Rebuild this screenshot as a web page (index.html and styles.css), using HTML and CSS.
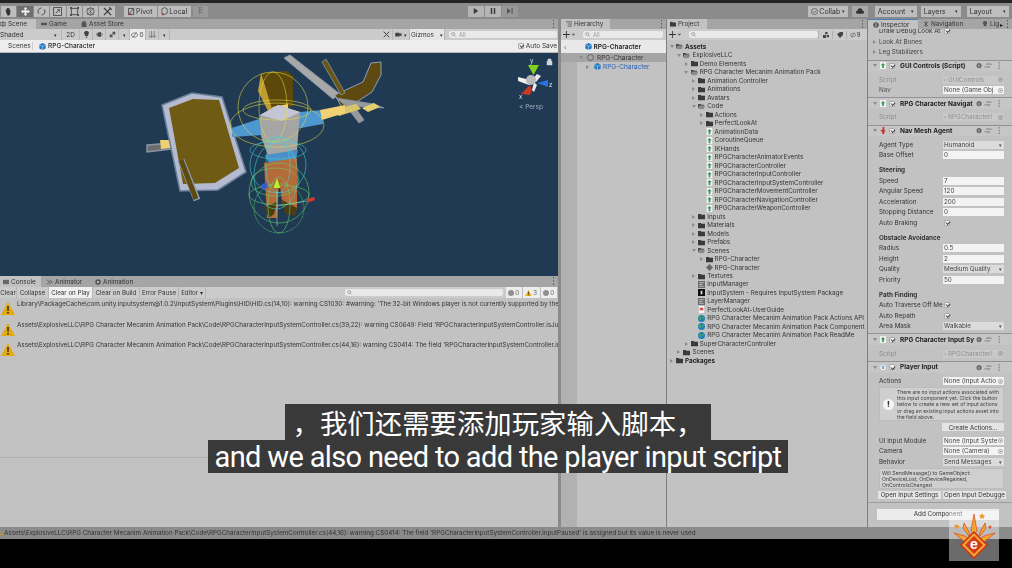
FILE: index.html
```html
<!DOCTYPE html>
<html lang="en">
<head>
<meta charset="utf-8">
<title>Unity Editor</title>
<link rel="stylesheet" href="styles.css">
</head>
<body>
<svg class="defs" width="0" height="0">
  <symbol id="folder" viewBox="0 0 8 7"><path d="M0 .5h3l1 1h4v5.500H0z" fill="#3a3a3a"/></symbol>
  <symbol id="folderopen" viewBox="0 0 8 7"><path d="M0 .5h3l1 1h3v1H2L0 6z" fill="#4a4a4a"/><path d="M2 3h6L6.500 6.500H.5z" fill="#8a8a8a"/></symbol>
  <symbol id="script" viewBox="0 0 7 8"><path d="M0 0h7v8H0z" fill="#f1f1f1"/><path d="M3.500 1 6 3.800H4.500V7h-2V3.800H1z" fill="#2f9a55"/></symbol>
  <symbol id="cube" viewBox="0 0 10 10"><path d="M5 0 9.500 2.300v5.400L5 10 .5 7.700V2.300z" fill="#2377c8"/><path d="M5 4.800 9.500 2.300M5 4.800.5 2.300M5 4.800V10" stroke="#dff" stroke-width=".7" fill="none"/></symbol>
  <symbol id="globe" viewBox="0 0 8 8"><circle cx="4" cy="4" r="4" fill="#1f7fb8"/><path d="M1 2c2-1 3 0 3 2S2 6 1 5zM5 1c2 0 2 2 2 3s-2 0-2-1z" fill="#45a35a"/></symbol>
  <symbol id="asset" viewBox="0 0 8 8"><path d="M0 0h8v8H0z" fill="#6c6c6c"/><path d="M1.500 2h5M1.500 4h3M1.500 6h5" stroke="#ddd" stroke-width=".8"/></symbol>
  <symbol id="warn" viewBox="0 0 14 13"><path d="M7 0 14 13H0z" fill="#e6a80f"/><path d="M6.200 4h1.600l-.2 5H6.400zM6.200 10h1.600v1.600H6.200z" fill="#2a2a2a"/></symbol>
  <symbol id="dots" viewBox="0 0 3 9"><path d="M1 0h1v1.500H1zM1 3.700h1v1.500H1zM1 7.400h1v1.500H1z" fill="#444"/></symbol>
  <symbol id="plus" viewBox="0 0 14 8"><path d="M3.500 0h1v3.500H8v1H4.500V8h-1V4.500H0v-1h3.500z" fill="#333"/><path d="M10 3h4l-2 2.500z" fill="#555"/></symbol>
  <symbol id="ctrls" viewBox="0 0 30 8"><circle cx="3" cy="4" r="3" fill="#666"/><path d="M2.600 2h.8v.8h-.8zM2.600 3.400h.8V6h-.8z" fill="#ddd"/><path d="M11 2.500h7M13 2.500l1-1.500M16 5.500H9M14 5.500l-1 1.500" stroke="#777" stroke-width=".8" fill="none"/><path d="M25.500 0h1v1.600h-1zM25.500 3.200h1v1.600h-1zM25.500 6.400h1V8h-1z" fill="#666"/></symbol>
  <symbol id="target" viewBox="0 0 6 6"><circle cx="3" cy="3" r="2.500" stroke="#888" fill="none" stroke-width=".8"/><circle cx="3" cy="3" r="1" fill="#888"/></symbol>
</svg>
<div id="app">
  <div class="topline"></div>
  <header class="toolbar">
    <div class="btngroup tools">
      <span class="tool"><svg viewBox="0 0 10 10"><path d="M2 5V3h1V1.500h1V1h1v.5h1V3h1v4L6 9.500H4z" fill="#333"/></svg></span>
      <span class="tool on"><svg viewBox="0 0 10 10"><path d="M5 0 7 2H6v2h2V3l2 2-2 2V6H6v2h1L5 10 3 8h1V6H2v1L0 5l2-2v1h2V2H3z" fill="#eee"/></svg></span>
      <span class="tool"><svg viewBox="0 0 10 10"><path d="M2 7.500A4 4 0 0 1 5 1M8 2.500A4 4 0 0 1 5 9" stroke="#444" fill="none"/></svg></span>
      <span class="tool"><svg viewBox="0 0 10 10"><path d="M.5.500h9v9h-9zM3 7l4-4M5 3h2v2" stroke="#444" fill="none"/></svg></span>
      <span class="tool"><svg viewBox="0 0 10 10"><path d="M1.500 1.500h7v7h-7z" stroke="#444" fill="none"/><path d="M0 0h2v2H0zM8 0h2v2H8zM0 8h2v2H0zM8 8h2v2H8z" fill="#444"/></svg></span>
      <span class="tool"><svg viewBox="0 0 10 10"><circle cx="5" cy="5" r="4" stroke="#555" fill="none"/><path d="M1 9 9 1M1 1l8 8M5 0v10" stroke="#555" stroke-width=".6"/></svg></span>
      <span class="tool"><svg viewBox="0 0 10 10"><path d="M1 1l8 8M9 1 1 9M7 .5 9.500 3" stroke="#333" stroke-width="1.300" fill="none"/></svg></span>
    </div>
    <div class="btngroup pivot">
      <span class="pbtn"><svg viewBox="0 0 8 10"><path d="M.5 1.500h6v7h-6z" stroke="#444" fill="none"/><path d="M1 8l5-6" stroke="#444"/><circle cx="2" cy="8" r="1.300" fill="#b33"/></svg>Pivot</span>
      <span class="pbtn"><svg viewBox="0 0 8 10"><path d="M1 2l3-1.500L7 2v5L4 8.500 1 7z" stroke="#555" fill="none"/><circle cx="2" cy="8" r="1.300" fill="#b33"/></svg>Local</span>
    </div>
    <span class="snap"><svg viewBox="0 0 8 10"><path d="M1 1h6M1 4h6M1 7h6M3 0v9" stroke="#7e6d6d" fill="none"/></svg></span>
    <div class="btngroup play">
      <span class="pl"><svg viewBox="0 0 8 8"><path d="M1 0l6 4-6 4z" fill="#3c3c3c"/></svg></span>
      <span class="pl"><svg viewBox="0 0 8 8"><path d="M1 0h2v8H1zM5 0h2v8H5z" fill="#3c3c3c"/></svg></span>
      <span class="pl dim"><svg viewBox="0 0 8 8"><path d="M0 0l5 4-5 4zM6 0h1.500v8H6z" fill="#555"/></svg></span>
    </div>
    <span class="tbtn collab"><svg viewBox="0 0 8 8"><circle cx="4" cy="4" r="3.500" fill="none" stroke="#666"/><path d="M2 4l1.500 1.500L6 2.800" stroke="#666" fill="none"/></svg>Collab<i>▾</i></span>
    <span class="tbtn cloud"><svg viewBox="0 0 10 7"><path d="M2 7a2 2 0 0 1 0-4 3 3 0 0 1 6 0 2 2 0 0 1 0 4z" fill="#333"/></svg></span>
    <span class="tbtn account">Account<i>▾</i></span>
    <span class="tbtn layers">Layers<i>▾</i></span>
    <span class="tbtn layout">Layout<i>▾</i></span>
  </header>

  <main class="main">
    <section class="leftcol">
      <div class="tabs scenetabs">
        <span class="tab active t-scene"><svg class="ti" viewBox="0 0 7 7"><path d="M3.500 0v7M0 2h7v3H0z" stroke="#555" fill="none"/></svg>Scene</span>
        <span class="tab t-game"><svg class="ti" viewBox="0 0 7 7"><path d="M0 2h7v3H0z" fill="#555"/></svg>Game</span>
        <span class="tab t-store"><svg class="ti" viewBox="0 0 7 7"><path d="M1 2h5v5H1zM2 2V.5h3V2" fill="#555" stroke="#555" stroke-width=".5"/></svg>Asset Store</span>
        <svg class="tabdots" viewBox="0 0 3 9"><use href="#dots"/></svg>
      </div>
      <div class="scenebar">
        <span class="sb shaded">Shaded<i>▾</i></span>
        <span class="sb s2d">2D</span>
        <span class="sb sic"><svg viewBox="0 0 8 10"><path d="M4 0a3 3 0 0 1 2 5.500V7H2V5.500A3 3 0 0 1 4 0zM3 8h2v1.500H3z" fill="#444"/></svg></span>
        <span class="sb sic"><svg viewBox="0 0 10 8"><path d="M4 1 7 0v8L4 7H2V1zM0 3h1v2H0zM8 2h1v4H8z" fill="#444"/></svg></span>
        <span class="sb sic"><svg viewBox="0 0 10 8"><path d="M1 4h4v4H1zM5 0h4v4H5z" fill="#555"/></svg></span>
        <span class="sb sarrow">▾</span>
        <span class="sb svis"><svg viewBox="0 0 10 8"><path d="M0 4c3-4 7-4 10 0-3 4-7 4-10 0zM2 8l6-8" stroke="#555" fill="none"/></svg>0</span>
        <span class="sb sic"><svg viewBox="0 0 8 8"><path d="M0 0v8M3 0v8M6 0v8M0 6h8" stroke="#777"/></svg></span>
        <span class="sb sarrow">▾</span>
        <span class="spacer"></span>
        <span class="sb sic"><svg viewBox="0 0 10 10"><path d="M1 1l8 8M9 1 1 9" stroke="#444" stroke-width="1.400"/></svg></span>
        <span class="sb scam"><svg viewBox="0 0 12 8"><path d="M0 1h7v6H0zM7 3l3-2v6L7 5z" fill="#444"/></svg>▾</span>
        <span class="sb gizmos">Gizmos<i>▾</i></span>
        <span class="search scenesearch"><svg viewBox="0 0 8 6"><circle cx="2.500" cy="2.500" r="1.800" stroke="#999" fill="none"/><path d="M4 4l1.500 1.500" stroke="#999"/></svg>All</span>
      </div>
      <div class="crumb">
        <span class="cscenes">Scenes</span>
        <svg class="cicon" viewBox="0 0 10 10"><use href="#cube"/></svg>
        <span class="cname">RPG-Character</span>
        <span class="spacer"></span>
        <span class="box checked"></span>
        <span class="autosave">Auto Save</span>
      </div>
      <div class="view">
        <svg class="sceneart" viewBox="0 53 558 223" preserveAspectRatio="none">
          <path d="M147 145l24-2v6l-24 3z" fill="#6d6d6d" stroke="#8a93a6" stroke-width="1.500"/>
          <path d="M160 140h10v8l-9 1z" fill="#f0d070"/>
          <path d="M162 105l30-12 30 4 24 75-28 18-38 1z" fill="#b4bad0" stroke="#6c7f99" stroke-width="1.500"/>
          <path d="M169 108l24-9 26 1 20 68-24 15-32 1z" fill="#6f5b13"/>
          <path d="M181 160l16 40" stroke="#8ea0b8" stroke-width="7"/>
          <path d="M181 160l15 39" stroke="#5d4a0e" stroke-width="5"/>
          <path d="M284 58l6-3 50 39-7 5z" fill="#a8a8a8" stroke="#8795a8"/>
          <path d="M371 63l10-1v13l-9 17-17 11-13 5-7-13 15-7 13-6z" fill="#5e4a10" stroke="#8ea0b8"/>
          <path d="M322 62l4-3 19 34-4 2z" fill="#6a5512" stroke="#8a93a6" stroke-width=".8"/>
          <path d="M336 98l38 6 10 4-38-2zM350 100l14 20-5 3-14-18z" fill="#9a9a9a" stroke="#8795a8" stroke-width=".8"/>
          <path d="M332 110l24-6 5 5-22 7z" fill="#d8c56a"/>
          <path d="M362 108l12-5 6 4-12 5z" fill="#e3cf70"/>
          <path d="M232 128l30-10 28-5 32-3 1 14-61 11-30 2z" fill="#4f97d0"/>
          <path d="M320 110l25-5v8l-23 7z" fill="#f0d174"/>
          <path d="M261 73l26-2 6 5v30l-20 6-10-28z" fill="#5d480c"/>
          <path d="M261 73l12 39-4 1-11-22z" fill="#bd9c32"/>
          <path d="M272 107l16-3v8l-10 3z" fill="#f0d174"/>
          <path d="M260 115l18-10 22 7-3 38-29 6-7-20z" fill="#a5a5a5"/>
          <path d="M260 115l18-10 22 7-18 9z" fill="#c4c6d6"/>
          <path d="M265 155l33-5-2 9-27 5z" fill="#4b90c8"/>
          <path d="M264 163l33-5 0 52-14-3-4-27-2 38-10 0z" fill="#b56a3a"/>
          <path d="M264 207l5 11 5-4 3-12zM282 200l15 8-2 8-10-2z" fill="#4a3d10"/>
          <g fill="none" stroke-width=".55">
            <g stroke="#e8dd3a">
              <circle cx="273" cy="107" r="35"/>
              <ellipse cx="273" cy="107" rx="14" ry="35"/>
              <ellipse cx="277" cy="125" rx="47" ry="22"/>
              <ellipse cx="277" cy="110" rx="34" ry="10"/>
            </g>
            <g stroke="#3fd7dd">
              <circle cx="278" cy="165" r="28"/>
              <ellipse cx="278" cy="165" rx="12" ry="28"/>
              <ellipse cx="276" cy="176" rx="22" ry="33"/>
              <ellipse cx="278" cy="150" rx="28" ry="9"/>
            </g>
            <g stroke="#63d46a">
              <circle cx="279" cy="193" r="30"/>
              <circle cx="279" cy="208" r="25" stroke-dasharray="2 .7"/>
              <ellipse cx="279" cy="195" rx="30" ry="10"/>
              <ellipse cx="279" cy="205" rx="11" ry="28"/>
              <ellipse cx="275" cy="182" rx="24" ry="14"/>
            </g>
          </g>
          <path d="M277 190v36M277 206l36-6" stroke="#7fe0d8" stroke-width=".6" fill="none"/>
          <path d="M277 178l3.500 10h-7z" fill="#b8f02a"/>
          <path d="M307 199l7-2 1 3-8 3z" fill="#d13a2c"/>
          <path d="M261 185l5-3 2 5-5 3z" fill="#3a5bd0"/>
          <path d="M518 77l8 2 6 3-3 3-11-4z" fill="#f0f0f0"/>
          <path d="M537 74l-6 7 5 1 5-6z" fill="#eaeaea"/>
          <path d="M534 82l-2 8 2 2 3-7z" fill="#eaeaea"/>
          <path d="M528 65h11l-5.500 10z" fill="#7ed321"/>
          <path d="M537 83l11-3 0 7z" fill="#2d6fe0"/>
          <path d="M521 94l9-9 2 5 -2 5z" fill="#c63a25"/>
          <circle cx="531" cy="80" r="5" fill="#b9b9b9"/>
          <path d="M547 61h5v4h-5zM548 61v-2h3v2" fill="#cfd5da" stroke="#cfd5da" stroke-width=".5"/>
        </svg>
        <span class="glabel gy">y</span>
        <span class="glabel gz">z</span>
        <span class="glabel gx">x</span>
        <span class="persp">&lt; Persp</span>
      </div>
      <div class="tabs consoletabs">
        <span class="tab active t-console"><svg class="ti" viewBox="0 0 7 7"><path d="M0 1h7v5H0z" fill="#666"/></svg>Console</span>
        <span class="tab t-animator"><svg class="ti" viewBox="0 0 7 7"><path d="M0 1l3 2.500L0 6M3 1l3 2.500L3 6" stroke="#555" fill="none"/></svg>Animator</span>
        <span class="tab t-animation"><svg class="ti" viewBox="0 0 7 7"><circle cx="3.500" cy="3.500" r="3.200" fill="#555"/><circle cx="3.500" cy="3.500" r="1.200" fill="#ddd"/></svg>Animation</span>
        <svg class="tabdots" viewBox="0 0 3 9"><use href="#dots"/></svg>
      </div>
      <div class="consolebar">
        <span class="cb c1">Clear</span>
        <span class="cb c2">Collapse</span>
        <span class="cb c3 on">Clear on Play</span>
        <span class="cb c4">Clear on Build</span>
        <span class="cb c5">Error Pause</span>
        <span class="cb c6">Editor ▾</span>
        <span class="spacer"></span>
        <span class="search consolesearch"><svg viewBox="0 0 8 6"><circle cx="2.500" cy="2.500" r="1.800" stroke="#999" fill="none"/><path d="M4 4l1.500 1.500" stroke="#999"/></svg></span>
        <span class="count c7"><b class="circ"></b>0</span>
        <span class="count c8"><svg viewBox="0 0 14 13"><use href="#warn"/></svg>3</span>
        <span class="count c7"><b class="circ"></b>0</span>
      </div>
      <div class="logs">
        <div class="log"><svg viewBox="0 0 14 13"><use href="#warn"/></svg><span>Library\PackageCache\com.unity.inputsystem@1.0.2\InputSystem\Plugins\HID\HID.cs(14,10): warning CS1030: #warning: 'The 32-bit Windows player is not currently supported by the Input System'</span></div>
        <div class="log"><svg viewBox="0 0 14 13"><use href="#warn"/></svg><span>Assets\ExplosiveLLC\RPG Character Mecanim Animation Pack\Code\RPGCharacterInputSystemController.cs(39,22): warning CS0649: Field 'RPGCharacterInputSystemController.isJumping' is never assigned to</span></div>
        <div class="log"><svg viewBox="0 0 14 13"><use href="#warn"/></svg><span>Assets\ExplosiveLLC\RPG Character Mecanim Animation Pack\Code\RPGCharacterInputSystemController.cs(44,16): warning CS0414: The field 'RPGCharacterInputSystemController.inputPaused' is assigned</span></div>
      </div>
      <div class="logdetail"></div>
    </section>

    <div class="split"></div>

    <section class="hierarchy">
      <div class="tabs">
        <span class="tab active t-hier"><svg class="ti" viewBox="0 0 7 7"><path d="M0 1h7M2 3.500h5M2 6h5" stroke="#555" fill="none"/></svg>Hierarchy</span>
        <svg class="tabdots" viewBox="0 0 3 9"><use href="#dots"/></svg>
      </div>
      <div class="minibar"><svg class="plus" viewBox="0 0 14 8"><use href="#plus"/></svg><span class="search hsearch"><svg viewBox="0 0 8 6"><circle cx="2.500" cy="2.500" r="1.800" stroke="#999" fill="none"/><path d="M4 4l1.500 1.500" stroke="#999"/></svg>All</span></div>
      <div class="hcrumb"><span class="back">‹</span><svg viewBox="0 0 10 10"><use href="#cube"/></svg><b>RPG-Character</b></div>
      <div class="hbody">
        <div class="hstrip"></div>
        <div class="hlist">
          <div class="hrow sel"><i class="arr down"></i><span class="smile"></span>RPG-Character</div>
          <div class="hrow child"><i class="arr"></i><svg viewBox="0 0 10 10"><use href="#cube"/></svg><span class="blue">RPG-Character</span></div>
        </div>
      </div>
    </section>

    <div class="line"></div>

    <section class="project">
      <div class="tabs">
        <span class="tab active t-proj"><svg class="ti" viewBox="0 0 8 7"><use href="#folder"/></svg>Project</span>
        <svg class="tabdots" viewBox="0 0 3 9"><use href="#dots"/></svg>
      </div>
      <div class="minibar pbar"><svg class="plus" viewBox="0 0 14 8"><use href="#plus"/></svg><span class="search psearch"><svg viewBox="0 0 8 6"><circle cx="2.500" cy="2.500" r="1.800" stroke="#999" fill="none"/><path d="M4 4l1.500 1.500" stroke="#999"/></svg></span>
        <span class="pic"><svg viewBox="0 0 8 8"><path d="M3 0h3v3H3zM0 4h4v4H0zM5 4h3v3H5z" fill="#444"/></svg></span>
        <span class="pic"><svg viewBox="0 0 8 8"><path d="M0 3 4 0h4v4L4 8z" fill="#444"/></svg></span>
        <span class="pic pic9"><svg viewBox="0 0 10 8"><path d="M0 4c3-4 7-4 10 0-3 4-7 4-10 0zM2 8l6-8" stroke="#555" fill="none"/></svg>9</span>
      </div>
      <div class="tree">
        <div class="r l0 bold"><i class="arr down"></i><svg viewBox="0 0 8 7"><use href="#folderopen"/></svg>Assets</div>
        <div class="r l1"><i class="arr down"></i><svg viewBox="0 0 8 7"><use href="#folderopen"/></svg>ExplosiveLLC</div>
        <div class="r l2"><i class="arr"></i><svg viewBox="0 0 8 7"><use href="#folder"/></svg>Demo Elements</div>
        <div class="r l2"><i class="arr down"></i><svg viewBox="0 0 8 7"><use href="#folderopen"/></svg>RPG Character Mecanim Animation Pack</div>
        <div class="r l3"><i class="arr"></i><svg viewBox="0 0 8 7"><use href="#folder"/></svg>Animation Controller</div>
        <div class="r l3"><i class="arr"></i><svg viewBox="0 0 8 7"><use href="#folder"/></svg>Animations</div>
        <div class="r l3"><i class="arr"></i><svg viewBox="0 0 8 7"><use href="#folder"/></svg>Avatars</div>
        <div class="r l3"><i class="arr down"></i><svg viewBox="0 0 8 7"><use href="#folderopen"/></svg>Code</div>
        <div class="r l4"><i class="arr"></i><svg viewBox="0 0 8 7"><use href="#folder"/></svg>Actions</div>
        <div class="r l4"><i class="arr"></i><svg viewBox="0 0 8 7"><use href="#folder"/></svg>PerfectLookAt</div>
        <div class="r l4"><i></i><svg viewBox="0 0 7 8"><use href="#script"/></svg>AnimationData</div>
        <div class="r l4"><i></i><svg viewBox="0 0 7 8"><use href="#script"/></svg>CoroutineQueue</div>
        <div class="r l4"><i></i><svg viewBox="0 0 7 8"><use href="#script"/></svg>IKHands</div>
        <div class="r l4"><i></i><svg viewBox="0 0 7 8"><use href="#script"/></svg>RPGCharacterAnimatorEvents</div>
        <div class="r l4"><i></i><svg viewBox="0 0 7 8"><use href="#script"/></svg>RPGCharacterController</div>
        <div class="r l4"><i></i><svg viewBox="0 0 7 8"><use href="#script"/></svg>RPGCharacterInputController</div>
        <div class="r l4"><i></i><svg viewBox="0 0 7 8"><use href="#script"/></svg>RPGCharacterInputSystemController</div>
        <div class="r l4"><i></i><svg viewBox="0 0 7 8"><use href="#script"/></svg>RPGCharacterMovementController</div>
        <div class="r l4"><i></i><svg viewBox="0 0 7 8"><use href="#script"/></svg>RPGCharacterNavigationController</div>
        <div class="r l4"><i></i><svg viewBox="0 0 7 8"><use href="#script"/></svg>RPGCharacterWeaponController</div>
        <div class="r l3"><i class="arr"></i><svg viewBox="0 0 8 7"><use href="#folder"/></svg>Inputs</div>
        <div class="r l3"><i class="arr"></i><svg viewBox="0 0 8 7"><use href="#folder"/></svg>Materials</div>
        <div class="r l3"><i class="arr"></i><svg viewBox="0 0 8 7"><use href="#folder"/></svg>Models</div>
        <div class="r l3"><i class="arr"></i><svg viewBox="0 0 8 7"><use href="#folder"/></svg>Prefabs</div>
        <div class="r l3"><i class="arr down"></i><svg viewBox="0 0 8 7"><use href="#folderopen"/></svg>Scenes</div>
        <div class="r l4"><i class="arr"></i><svg viewBox="0 0 8 7"><use href="#folder"/></svg>RPG-Character</div>
        <div class="r l4"><i></i><svg viewBox="0 0 8 8"><path d="M4 0 8 4 4 8 0 4z" fill="#666"/></svg>RPG-Character</div>
        <div class="r l3"><i class="arr"></i><svg viewBox="0 0 8 7"><use href="#folder"/></svg>Textures</div>
        <div class="r l3"><i class="noarr"></i><svg viewBox="0 0 8 8"><use href="#asset"/></svg>InputManager</div>
        <div class="r l3"><i class="noarr"></i><svg viewBox="0 0 8 8"><path d="M0 0h8v8H0z" fill="#111"/><path d="M3 2h2v4H3z" fill="#ddd"/></svg>InputSystem - Requires InputSystem Package</div>
        <div class="r l3"><i class="noarr"></i><svg viewBox="0 0 8 8"><use href="#asset"/></svg>LayerManager</div>
        <div class="r l3"><i class="noarr"></i><svg viewBox="0 0 8 8"><path d="M1 0h6v8H1z" fill="#f4f4f4"/><path d="M2 2h4v3H2z" fill="#d9534f"/></svg>PerfectLookAt-UserGuide</div>
        <div class="r l3"><i class="noarr"></i><svg viewBox="0 0 8 8"><use href="#globe"/></svg>RPG Character Mecanim Animation Pack Actions API</div>
        <div class="r l3"><i class="noarr"></i><svg viewBox="0 0 8 8"><use href="#globe"/></svg>RPG Character Mecanim Animation Pack Component</div>
        <div class="r l3"><i class="noarr"></i><svg viewBox="0 0 8 8"><use href="#globe"/></svg>RPG Character Mecanim Animation Pack ReadMe</div>
        <div class="r l2"><i class="arr"></i><svg viewBox="0 0 8 7"><use href="#folder"/></svg>SuperCharacterController</div>
        <div class="r l1"><i class="arr"></i><svg viewBox="0 0 8 7"><use href="#folder"/></svg>Scenes</div>
        <div class="r l0 bold"><i class="arr"></i><svg viewBox="0 0 8 7"><use href="#folder"/></svg>Packages</div>
      </div>
    </section>

    <div class="line"></div>

    <section class="inspector">
      <div class="tabs">
        <span class="tab active t-insp"><svg class="ti" viewBox="0 0 7 7"><circle cx="3.500" cy="3.500" r="3.200" fill="#555"/><path d="M3 1.500h1v1H3zM3 3h1v2.500H3z" fill="#ddd"/></svg>Inspector</span>
        <span class="tab t-nav"><svg class="ti" viewBox="0 0 7 7"><path d="M1 1l5 5M6 1 1 6M3.500 0v7" stroke="#555" fill="none"/></svg>Navigation</span>
        <span class="tab t-lig"><svg class="ti" viewBox="0 0 7 7"><path d="M3.500 0a2.500 2.500 0 0 1 1.500 4.500V6H2V4.500A2.500 2.500 0 0 1 3.500 0z" fill="#555"/></svg>Lig</span>
        <span class="more">▸</span>
        <svg class="tabdots" viewBox="0 0 3 9"><use href="#dots"/></svg>
      </div>
      <div class="ibody">
        <div class="row first"><label>Draw Debug Look At</label><span class="box checked"></span></div>
        <div class="row fold"><i class="arr"></i>Look At Bones</div>
        <div class="row fold"><i class="arr"></i>Leg Stabilizers</div>

        <div class="comp"><i class="arr down"></i><svg viewBox="0 0 7 8"><use href="#script"/></svg><span class="box checked"></span><b>GUI Controls (Script)</b><svg class="ctrls" viewBox="0 0 30 8"><use href="#ctrls"/></svg></div>
        <div class="row dim"><label>Script</label><span class="field ghost">▫ GUIControls<svg class="tg" viewBox="0 0 6 6"><use href="#target"/></svg></span></div>
        <div class="row"><label class="soft">Nav</label><span class="field">None (Game Obj<svg class="tg" viewBox="0 0 6 6"><use href="#target"/></svg></span></div>

        <div class="comp"><i class="arr down"></i><svg viewBox="0 0 7 8"><use href="#script"/></svg><span class="box checked"></span><b>RPG Character Navigat</b><svg class="ctrls" viewBox="0 0 30 8"><use href="#ctrls"/></svg></div>
        <div class="row dim"><label>Script</label><span class="field ghost">▫ RPGCharacterI<svg class="tg" viewBox="0 0 6 6"><use href="#target"/></svg></span></div>

        <div class="comp"><i class="arr down"></i><svg viewBox="0 0 7 8"><path d="M3 0h2v3l2 2H5v3H3L2 5 0 4l3-1z" fill="#c9302c"/></svg><span class="box checked"></span><b>Nav Mesh Agent</b><svg class="ctrls" viewBox="0 0 30 8"><use href="#ctrls"/></svg></div>
        <div class="row"><label>Agent Type</label><span class="drop">Humanoid<i>▾</i></span></div>
        <div class="row"><label>Base Offset</label><span class="field">0</span></div>
        <div class="head">Steering</div>
        <div class="row"><label>Speed</label><span class="field">7</span></div>
        <div class="row"><label>Angular Speed</label><span class="field">120</span></div>
        <div class="row"><label>Acceleration</label><span class="field">200</span></div>
        <div class="row"><label>Stopping Distance</label><span class="field">0</span></div>
        <div class="row"><label>Auto Braking</label><span class="box checked"></span></div>
        <div class="head">Obstacle Avoidance</div>
        <div class="row"><label>Radius</label><span class="field">0.5</span></div>
        <div class="row"><label>Height</label><span class="field">2</span></div>
        <div class="row"><label>Quality</label><span class="drop">Medium Quality<i>▾</i></span></div>
        <div class="row"><label>Priority</label><span class="field">50</span></div>
        <div class="head">Path Finding</div>
        <div class="row"><label>Auto Traverse Off Me</label><span class="box checked"></span></div>
        <div class="row"><label>Auto Repath</label><span class="box checked"></span></div>
        <div class="row"><label>Area Mask</label><span class="drop">Walkable<i>▾</i></span></div>

        <div class="comp tall"><i class="arr down"></i><svg viewBox="0 0 7 8"><use href="#script"/></svg><span class="box checked"></span><b>RPG Character Input Sy</b><svg class="ctrls" viewBox="0 0 30 8"><use href="#ctrls"/></svg></div>
        <div class="row dim"><label>Script</label><span class="field ghost">▫ RPGCharacterI<svg class="tg" viewBox="0 0 6 6"><use href="#target"/></svg></span></div>

        <div class="comp"><i class="arr down"></i><svg viewBox="0 0 8 8"><circle cx="4" cy="4" r="3.500" fill="#e9eef2"/><path d="M3 2h2v4H3z" fill="#5a8fb5"/></svg><span class="box checked"></span><b>Player Input</b><svg class="ctrls" viewBox="0 0 30 8"><use href="#ctrls"/></svg></div>
        <div class="row"><label>Actions</label><span class="field">None (Input Actio<svg class="tg" viewBox="0 0 6 6"><use href="#target"/></svg></span></div>
        <div class="help">
          <span class="bang">!</span>
          <p>There are no input actions associated with this input component yet. Click the button below to create a new set of input actions or drag an existing input actions asset into the field above.</p>
        </div>
        <div class="actionbtn"><span>Create Actions...</span></div>
        <div class="row ui"><label>UI Input Module</label><span class="field">None (Input Syste<svg class="tg" viewBox="0 0 6 6"><use href="#target"/></svg></span></div>
        <div class="row"><label>Camera</label><span class="field">None (Camera)<svg class="tg" viewBox="0 0 6 6"><use href="#target"/></svg></span></div>
        <div class="row"><label>Behavior</label><span class="drop">Send Messages<i>▾</i></span></div>
        <div class="msg">Will SendMessage() to GameObject:<br>OnDeviceLost, OnDeviceRegained,<br>OnControlsChanged</div>
        <div class="twobtn"><span>Open Input Settings</span><span>Open Input Debugge</span></div>
        <div class="addwrap"><span class="add">Add Component</span></div>
      </div>
    </section>
  </main>

  <footer class="status"><svg viewBox="0 0 14 13"><use href="#warn"/></svg><span>Assets\ExplosiveLLC\RPG Character Mecanim Animation Pack\Code\RPGCharacterInputSystemController.cs(44,16): warning CS0414: The field 'RPGCharacterInputSystemController.inputPaused' is assigned but its value is never used</span></footer>
</div>

<div class="subs">
  <div class="sub zh">，我们还需要添加玩家输入脚本，</div>
  <div class="sub en">and we also need to add the player input script</div>
</div>

<div class="logo">
  <svg viewBox="0 0 50 50">
    <g fill="#f2a531" stroke="#d9451c" stroke-width=".7">
      <path d="M25 3l3 17-3 4-3-4z"/>
      <path d="M15 12l6 11-1 2-6-8z"/>
      <path d="M36 12l-6 11 1 2 6-8z"/>
      <path d="M5 22l11 3 4 3-4 3z"/>
      <path d="M46 22l-11 3-4 3 4 3z"/>
    </g>
    <path d="M33 2l1 2 2 0-1.500 2 .5 2-2-1-2 1 .5-2L30 4l2 0z" fill="#f0982c"/>
    <path d="M8 13l1 1.500 2 .5-1.500 1.500L9 18l-1.500-1-2 .5.5-2L5 14l2 0z" fill="#f0982c"/>
    <circle cx="41" cy="16" r="1.500" fill="#e2553a"/>
    <path d="M25 21 38 34 25 47 12 34z" fill="#f2a531" stroke="#c93416" stroke-width="1.500"/>
    <path d="M25 25 34 34 25 43 16 34z" fill="#d43c1a"/>
    <text x="25" y="38" class="logoe">e</text>
  </svg>
</div>
</body>
</html>
```
FILE: styles.css
```css
* { box-sizing: border-box; }
html, body { margin: 0; padding: 0; }
body { width: 1012px; height: 568px; overflow: hidden; background: #000; position: relative; font-family: Inter, "Liberation Sans", sans-serif; font-size: 6.4px; color: #1e1e1e; }
.defs { position: absolute; }
i, em, u { font-style: normal; text-decoration: none; }
svg { display: block; }
#app { width: 1012px; height: 568px; display: flex; flex-direction: column; filter: blur(.35px); }
.spacer { flex: 1; }

.topline { height: 3px; background: #232323; flex: none; }
.toolbar { height: 16px; flex: none; background: #8b8b8b; display: flex; align-items: center; padding-left: 1px; }
.btngroup { display: flex; height: 11px; gap: 1px; }
.tool { width: 15.400px; background: #bdbdbd; display: flex; align-items: center; justify-content: center; }
.tool svg { width: 9px; height: 9px; }
.tool.on { background: #6e6e6e; }
.pivot { margin-left: 9px; }
.pbtn { background: #bdbdbd; width: 33px; display: flex; align-items: center; justify-content: center; gap: 1px; font-size: 7px; color: #333; }
.pbtn svg { width: 7px; height: 9px; }
.snap { width: 15px; height: 11px; margin-left: 2px; background: #9a9a9a; display: flex; align-items: center; justify-content: center; }
.snap svg { width: 7px; height: 8px; }
.play { margin-left: 260px; }
.pl { width: 16px; background: #b5b5b5; display: flex; align-items: center; justify-content: center; }
.pl svg { width: 6px; height: 6px; }
.pl.dim { background: #989898; }
.tbtn { height: 11px; background: #bdbdbd; font-size: 7px; color: #333; display: flex; align-items: center; justify-content: space-between; padding: 0 3px; white-space: nowrap; }
.tbtn i { font-size: 5px; }
.tbtn svg { width: 7px; height: 7px; }
.collab { width: 40px; margin-left: 290px; }
.cloud { width: 16px; margin-left: 4px; justify-content: center; background: #a9a9a9; }
.cloud svg { width: 8px; height: 6px; }
.account { width: 42px; margin-left: 7px; }
.layers { width: 40px; margin-left: 4px; }
.layout { width: 42px; margin-left: 6px; }

.main { flex: none; height: 508px; display: grid; grid-template-columns: 558px 3px 105px 1px 200px 1px 144px; background: #c2c2c2; }
.leftcol, .hierarchy, .project, .inspector { display: flex; flex-direction: column; min-width: 0; overflow: hidden; }
.split { background: #8a8a8a; }
.line { background: #7f7f7f; }

.tabs { height: 10px; flex: none; background: #a5a5a5; display: flex; position: relative; align-items: stretch; }
.consoletabs { height: 11px; }
.tab { display: flex; align-items: center; white-space: nowrap; font-size: 6.400px; color: #333; gap: 2px; }
.tab.active { background: #c2c2c2; }
.ti { width: 6px; height: 6px; flex: none; }
.tabdots { position: absolute; right: 3px; top: 1px; width: 3px; height: 8px; }
.t-scene { width: 36px; }
.t-game { margin-left: 5px; width: 40px; }
.t-console { width: 41px; }
.t-console, .t-hier, .t-proj, .t-insp { padding-left: 3px; }
.t-animator { margin-left: 6px; width: 48px; }
.t-hier { width: 49px; padding-left: 5px; }
.t-proj { width: 40px; padding-left: 3px; }
.t-insp { width: 50px; border-top: 1px solid #4a7fb5; padding-left: 5px; }
.t-nav { width: 54px; padding-left: 5px; }
.t-lig { width: 28px; padding-left: 10px; }
.more { font-size: 6px; align-self: center; }

.scenebar { height: 11px; flex: none; background: #cbcbcb; display: flex; align-items: stretch; font-size: 6.500px; color: #333; }
.sb { display: flex; align-items: center; justify-content: center; border-right: 1px solid #b5b5b5; white-space: nowrap; }
.sb i { font-size: 5px; }
.shaded { width: 62px; justify-content: space-between; padding-right: 4px; }
.s2d { width: 18px; }
.sic { width: 13px; }
.sic svg { width: 7px; height: 7px; }
.sarrow { width: 11px; font-size: 5px; }
.svis { width: 16px; background: #ececec; gap: 1px; }
.svis svg { width: 7px; height: 6px; }
.scam { width: 17px; font-size: 5px; gap: 1px; }
.scam svg { width: 8px; height: 5px; }
.gizmos { width: 35px; background: #e6e6e6; justify-content: space-between; padding: 0 1px; }
.search { background: #e9e9e9; border-radius: 2px; color: #999; display: flex; align-items: center; padding-left: 2px; white-space: nowrap; height: 7px; font-size: 5.500px; gap: 1px; }
.search svg { width: 7px; height: 5px; flex: none; }
.scenesearch { width: 108px; align-self: center; margin: 0 1px 0 4px; }

.crumb { height: 13px; flex: none; background: #ededed; border-bottom: 1px solid #b9b9b9; display: flex; align-items: center; font-size: 6.500px; padding-right: 1px; }
.cscenes { width: 33px; padding-left: 8px; border-right: 1px solid #ccc; color: #333; }
.cicon { width: 7px; height: 7px; margin-left: 6px; }
.cname { font-weight: 500; color: #222; margin-left: 2px; }
.autosave { margin-left: 2px; color: #333; }
.box { width: 6px; height: 6px; background: #efefef; border: 1px solid #a9a9a9; border-radius: 1px; display: inline-block; position: relative; flex: none; }
.box.checked::after { content: ""; position: absolute; left: .8px; top: .2px; width: 3px; height: 2px; border-left: .8px solid #444; border-bottom: .8px solid #444; transform: rotate(-45deg); }

.view { height: 223px; flex: none; background: #203a54; position: relative; }
.sceneart { width: 100%; height: 100%; }
.glabel { position: absolute; color: #e6e6e6; font-size: 6px; }
.gy { left: 530px; top: 4px; }
.gz { left: 549px; top: 28px; }
.gx { left: 519px; top: 40px; }
.persp { position: absolute; left: 519px; top: 50px; color: #a3b0bd; font-size: 6.500px; }

.consolebar { height: 11px; flex: none; background: #cbcbcb; display: flex; align-items: stretch; font-size: 6.200px; color: #333; }
.cb { display: flex; align-items: center; justify-content: center; border-right: 1px solid #b5b5b5; white-space: nowrap; }
.cb.on { background: #f0f0f0; }
.c1 { width: 17px; }
.c2 { width: 32px; }
.c3 { width: 44px; }
.c4 { width: 47px; }
.c5 { width: 39px; }
.c6 { width: 27px; }
.consolesearch { width: 158px; align-self: center; margin-right: 3px; }
.count { width: 17.500px; background: #ededed; border-right: 1px solid #bbb; display: flex; align-items: center; justify-content: center; gap: 1px; color: #666; }
.count svg { width: 7px; height: 6px; }
.circ { width: 6px; height: 6px; background: #8f8f8f; border-radius: 50%; }

.logs { flex: none; height: 159px; }
.log { height: 20.500px; display: flex; white-space: nowrap; overflow: hidden; padding-left: 1px; font-size: 6.300px; color: #333; }
.log svg { width: 14px; height: 13px; margin-top: 4px; flex: none; }
.log span { margin-left: 2px; margin-top: 2px; }
.logdetail { flex: 1; border-top: 1px solid #b0b0b0; }

.minibar { height: 11px; flex: none; display: flex; align-items: center; background: #cbcbcb; padding-left: 1px; }
.plus { width: 14px; height: 7px; margin: 0 7px 0 0; flex: none; }
.hsearch { width: 80px; }
.hcrumb { height: 13px; flex: none; background: #e8e8e8; display: flex; align-items: center; padding-left: 3px; font-size: 6.500px; }
.hcrumb svg { width: 7px; height: 7px; margin-left: 18px; }
.hcrumb b { margin-left: 2px; font-weight: 600; }
.back { color: #666; }
.hbody { flex: 1; display: flex; background: #c2c2c2; }
.hstrip { width: 16px; background: #b1b1b1; }
.hlist { flex: 1; }
.hrow { height: 9px; display: flex; align-items: center; font-size: 6.500px; color: #333; }
.hrow.sel { background: #a5a5a5; margin-left: -16px; padding-left: 18px; }
.hrow svg { width: 7px; height: 7px; margin: 0 2px 0 0; }
.hrow.child { padding-left: 9px; }
.hrow .arr { margin-right: 2px; }
.smile { width: 7px; height: 7px; border: 1px solid #666; border-radius: 50%; margin-right: 3px; }
.blue { color: #2a5fb5; }

.psearch { width: 129px; }
.pic { width: 14px; height: 8px; display: flex; align-items: center; justify-content: center; font-size: 6px; color: #333; border-left: 1px solid #b0b0b0; }
.pic svg { width: 6px; height: 6px; }
.pic9 { gap: 1px; width: 17px; }
.tree { padding-top: 2.700px; }
.r { height: 8.490px; display: flex; align-items: center; white-space: nowrap; font-size: 6.300px; color: #333; }
.r > i { width: 6px; flex: none; }
.r > svg { width: 7px; height: 7px; margin-right: 2px; flex: none; }
.r.bold { font-weight: 700; color: #222; }
.l0 { padding-left: 3px; }
.l1 { padding-left: 10.400px; }
.l2 { padding-left: 17.800px; }
.l3 { padding-left: 25.200px; }
.l4 { padding-left: 32.600px; }
.arr { display: inline-block; position: relative; }
.arr::before { content: ""; position: absolute; left: 0; top: -2px; border-left: 3px solid #8a8a8a; border-top: 2px solid transparent; border-bottom: 2px solid transparent; }
.arr.down::before { left: -.5px; top: -1.500px; border-top: 3px solid #8a8a8a; border-left: 2px solid transparent; border-right: 2px solid transparent; border-bottom: 0; }
.hrow .arr, .row .arr, .comp .arr { width: 6px; flex: none; height: 0; }

.ibody { flex: 1; overflow: hidden; }
.row { height: 10.500px; display: flex; align-items: center; padding: 0 8px 0 11px; font-size: 6.300px; color: #333; white-space: nowrap; }
.row.first { margin-top: -3px; }
.row label { width: 64px; flex: none; overflow: hidden; }
.row .box { margin-left: 1px; }
.row.fold { padding-left: 5px; color: #444; }
.row.dim { color: #8d8d8d; }
.soft { color: #555; }
.field { flex: 1; height: 8px; background: #f3f3f3; display: flex; align-items: center; justify-content: space-between; padding: 0 1px; overflow: hidden; min-width: 0; color: #444; }
.tg { width: 5px; height: 5px; flex: none; }
.field.ghost { background: #c9c9c9; color: #8f8f8f; }
.drop { flex: 1; height: 8px; background: #dcdcdc; display: flex; align-items: center; justify-content: space-between; padding: 0 2px 0 1px; color: #444; }
.drop i { font-size: 5px; }
.comp { height: 11.500px; margin-top: 2px; margin-bottom: 3.300px; background: #c6c6c6; border-top: 1px solid #929292; display: flex; align-items: center; padding-left: 5px; font-size: 6.500px; white-space: nowrap; overflow: hidden; }
.comp .arr { width: 7px; }
.comp > svg { width: 6px; height: 7px; margin-right: 3px; flex: none; }
.comp .box { margin-right: 5px; }
.comp b { font-weight: 700; width: 75px; flex: none; overflow: hidden; }
.comp > svg.ctrls { width: 29px; height: 7px; margin: 0; }
.comp.tall { margin-top: 2px; height: 12px; }
.head { height: 10px; margin-top: 5px; padding-left: 11px; display: flex; align-items: center; font-weight: 700; color: #333; font-size: 6.300px; }
.help { margin: 1px 8px 0 11px; height: 34px; background: #cfcfcf; border: 1px solid #bcbcbc; display: flex; align-items: center; padding: 0 1px 0 3px; gap: 3px; }
.bang { width: 11px; height: 11px; border-radius: 50%; background: #f6f6f6; color: #333; font-weight: 800; font-size: 8px; display: flex; align-items: center; justify-content: center; flex: none; }
.help p { margin: 0; font-size: 5.100px; line-height: 6.300px; color: #444; }
.actionbtn { display: flex; justify-content: flex-end; padding-right: 8px; margin-top: 2px; }
.actionbtn span { width: 62px; height: 8px; background: #e4e4e4; font-size: 6.200px; display: flex; align-items: center; justify-content: center; color: #333; }
.row.ui { margin-top: 4px; }
.msg { margin: 1px 8px 0 11px; height: 21px; background: #cfcfcf; border: 1px solid #bcbcbc; font-size: 5.200px; line-height: 6.200px; padding: 1px 1px 0 2px; color: #444; white-space: nowrap; overflow: hidden; }
.twobtn { display: flex; gap: 2px; margin: 2px 0 0 10px; height: 8px; overflow: hidden; white-space: nowrap; }
.twobtn span { background: #e4e4e4; display: flex; align-items: center; justify-content: center; font-size: 6.200px; flex: none; width: 63px; padding: 0 1px; color: #333; }
.addwrap { margin-top: 3px; border-top: 1px solid #9c9c9c; padding: 6px 0 0 9px; }
.add { display: flex; align-items: center; justify-content: center; width: 122px; height: 11px; background: #ececec; font-size: 6.300px; color: #333; }

.status { height: 12px; flex: none; background: #8b8b8b; display: flex; align-items: center; white-space: nowrap; font-size: 6.300px; color: #333; overflow: hidden; }
.status svg { width: 4px; height: 5px; flex: none; }

.subs { position: absolute; left: 0; width: 996px; top: 404px; display: flex; flex-direction: column; align-items: center; color: #fff; }
.sub { background: #393939; white-space: nowrap; display: flex; align-items: center; justify-content: center; }
.zh { width: 426px; height: 36px; font-family: "Noto Sans CJK SC", sans-serif; font-size: 27.400px; }
.en { width: 580px; height: 33px; font-family: Roboto, sans-serif; font-size: 29px; letter-spacing: -.66px; }
.logo { position: absolute; left: 949px; top: 511px; width: 50px; height: 50px; background: rgba(255,255,255,.42); }
.logo svg { width: 50px; height: 50px; }
.logoe { fill: #fff; font: 700 14px "Liberation Sans", sans-serif; text-anchor: middle; }
```
